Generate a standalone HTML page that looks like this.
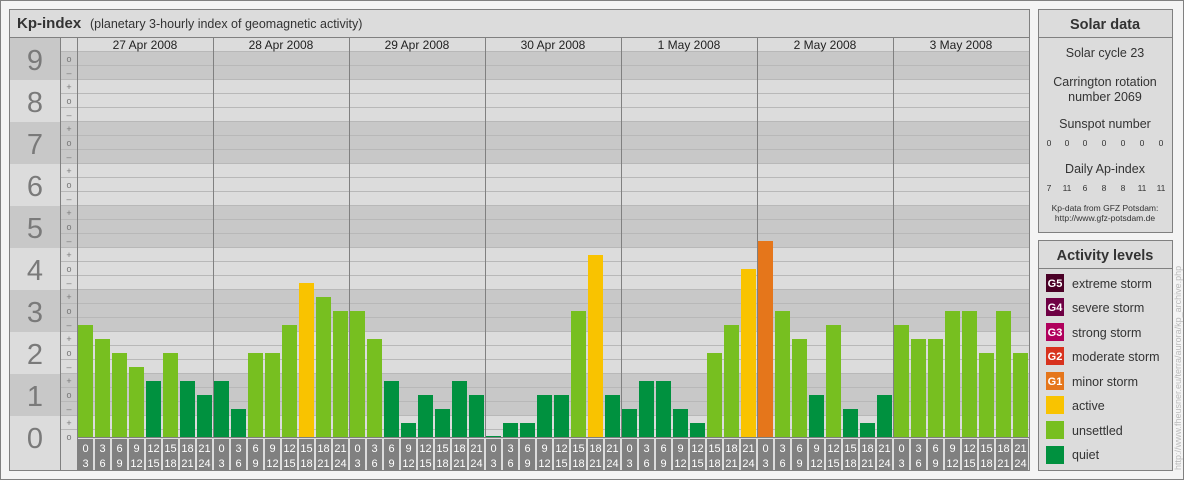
<!DOCTYPE html>
<html><head><meta charset="utf-8"><style>
body{margin:0;background:#fff}
svg{display:block;font-family:"Liberation Sans",sans-serif}
</style></head><body>
<svg width="1184" height="480" xmlns="http://www.w3.org/2000/svg">
<rect x="0.5" y="0.5" width="1183" height="479" fill="#f4f4f4" stroke="#808080"/>
<!-- main panel -->
<rect x="9.5" y="9.5" width="1020" height="461" fill="#dcdcdc" stroke="#808080"/>
<line x1="10" y1="37.5" x2="1029" y2="37.5" stroke="#808080"/>
<text x="17" y="28" font-size="15" font-weight="bold" fill="#333">Kp-index</text>
<text x="90" y="28" font-size="12.5" fill="#333">(planetary 3-hourly index of geomagnetic activity)</text>
<!-- number column bands -->
<g fill="#c8c8c8">
<rect x="10" y="38" width="50" height="42"/>
<rect x="10" y="122" width="50" height="42"/>
<rect x="10" y="206" width="50" height="42"/>
<rect x="10" y="290" width="50" height="42"/>
<rect x="10" y="374" width="50" height="42"/>
<rect x="60" y="51" width="969" height="29"/>
<rect x="60" y="122" width="969" height="42"/>
<rect x="60" y="206" width="969" height="42"/>
<rect x="60" y="290" width="969" height="42"/>
<rect x="60" y="374" width="969" height="42"/>
</g>
<g stroke="#b8b8b8" stroke-width="1">
<line x1="60" x2="1029" y1="51.5" y2="51.5"/><line x1="60" x2="1029" y1="65.5" y2="65.5"/><line x1="60" x2="1029" y1="79.5" y2="79.5"/><line x1="60" x2="1029" y1="93.5" y2="93.5"/><line x1="60" x2="1029" y1="107.5" y2="107.5"/><line x1="60" x2="1029" y1="121.5" y2="121.5"/><line x1="60" x2="1029" y1="135.5" y2="135.5"/><line x1="60" x2="1029" y1="149.5" y2="149.5"/><line x1="60" x2="1029" y1="163.5" y2="163.5"/><line x1="60" x2="1029" y1="177.5" y2="177.5"/><line x1="60" x2="1029" y1="191.5" y2="191.5"/><line x1="60" x2="1029" y1="205.5" y2="205.5"/><line x1="60" x2="1029" y1="219.5" y2="219.5"/><line x1="60" x2="1029" y1="233.5" y2="233.5"/><line x1="60" x2="1029" y1="247.5" y2="247.5"/><line x1="60" x2="1029" y1="261.5" y2="261.5"/><line x1="60" x2="1029" y1="275.5" y2="275.5"/><line x1="60" x2="1029" y1="289.5" y2="289.5"/><line x1="60" x2="1029" y1="303.5" y2="303.5"/><line x1="60" x2="1029" y1="317.5" y2="317.5"/><line x1="60" x2="1029" y1="331.5" y2="331.5"/><line x1="60" x2="1029" y1="345.5" y2="345.5"/><line x1="60" x2="1029" y1="359.5" y2="359.5"/><line x1="60" x2="1029" y1="373.5" y2="373.5"/><line x1="60" x2="1029" y1="387.5" y2="387.5"/><line x1="60" x2="1029" y1="401.5" y2="401.5"/><line x1="60" x2="1029" y1="415.5" y2="415.5"/><line x1="60" x2="1029" y1="429.5" y2="429.5"/>
</g>
<g stroke="#808080">
<line x1="60.5" y1="38" x2="60.5" y2="470"/><line x1="77.5" y1="38" x2="77.5" y2="470"/>
<line x1="213.5" y1="38" x2="213.5" y2="470"/><line x1="349.5" y1="38" x2="349.5" y2="470"/><line x1="485.5" y1="38" x2="485.5" y2="470"/><line x1="621.5" y1="38" x2="621.5" y2="470"/><line x1="757.5" y1="38" x2="757.5" y2="470"/><line x1="893.5" y1="38" x2="893.5" y2="470"/>
</g>
<!-- numbers -->
<g font-size="29" fill="#7a7a7a" text-anchor="middle">
<text x="35" y="70">9</text><text x="35" y="112">8</text><text x="35" y="154">7</text><text x="35" y="196">6</text><text x="35" y="238">5</text><text x="35" y="280">4</text><text x="35" y="322">3</text><text x="35" y="364">2</text><text x="35" y="406">1</text><text x="35" y="448">0</text>
</g>
<!-- ticks -->
<g font-size="9" fill="#777" text-anchor="middle">
<text x="69" y="62">o</text><text x="69" y="76">–</text>
<text x="69" y="90">+</text><text x="69" y="104">o</text><text x="69" y="118">–</text>
<text x="69" y="132">+</text><text x="69" y="146">o</text><text x="69" y="160">–</text>
<text x="69" y="174">+</text><text x="69" y="188">o</text><text x="69" y="202">–</text>
<text x="69" y="216">+</text><text x="69" y="230">o</text><text x="69" y="244">–</text>
<text x="69" y="258">+</text><text x="69" y="272">o</text><text x="69" y="286">–</text>
<text x="69" y="300">+</text><text x="69" y="314">o</text><text x="69" y="328">–</text>
<text x="69" y="342">+</text><text x="69" y="356">o</text><text x="69" y="370">–</text>
<text x="69" y="384">+</text><text x="69" y="398">o</text><text x="69" y="412">–</text>
<text x="69" y="426">+</text><text x="69" y="440">o</text>
</g>
<!-- dates -->
<g font-size="12" fill="#222" text-anchor="middle">
<text x="145" y="49">27 Apr 2008</text><text x="281" y="49">28 Apr 2008</text><text x="417" y="49">29 Apr 2008</text><text x="553" y="49">30 Apr 2008</text><text x="689" y="49">1 May 2008</text><text x="825" y="49">2 May 2008</text><text x="961" y="49">3 May 2008</text>
</g>
<!-- bars -->
<g transform="translate(78,0)">
<rect x="0" y="325" width="15" height="112" fill="#77bf20"/><rect x="17" y="339" width="15" height="98" fill="#77bf20"/><rect x="34" y="353" width="15" height="84" fill="#77bf20"/><rect x="51" y="367" width="15" height="70" fill="#77bf20"/><rect x="68" y="381" width="15" height="56" fill="#00913f"/><rect x="85" y="353" width="15" height="84" fill="#77bf20"/><rect x="102" y="381" width="15" height="56" fill="#00913f"/><rect x="119" y="395" width="15" height="42" fill="#00913f"/>
</g>
<g transform="translate(214,0)">
<rect x="0" y="381" width="15" height="56" fill="#00913f"/><rect x="17" y="409" width="15" height="28" fill="#00913f"/><rect x="34" y="353" width="15" height="84" fill="#77bf20"/><rect x="51" y="353" width="15" height="84" fill="#77bf20"/><rect x="68" y="325" width="15" height="112" fill="#77bf20"/><rect x="85" y="283" width="15" height="154" fill="#f9c300"/><rect x="102" y="297" width="15" height="140" fill="#77bf20"/><rect x="119" y="311" width="15" height="126" fill="#77bf20"/>
</g>
<g transform="translate(350,0)">
<rect x="0" y="311" width="15" height="126" fill="#77bf20"/><rect x="17" y="339" width="15" height="98" fill="#77bf20"/><rect x="34" y="381" width="15" height="56" fill="#00913f"/><rect x="51" y="423" width="15" height="14" fill="#00913f"/><rect x="68" y="395" width="15" height="42" fill="#00913f"/><rect x="85" y="409" width="15" height="28" fill="#00913f"/><rect x="102" y="381" width="15" height="56" fill="#00913f"/><rect x="119" y="395" width="15" height="42" fill="#00913f"/>
</g>
<g transform="translate(486,0)">
<rect x="0" y="436" width="15" height="1" fill="#00913f"/><rect x="17" y="423" width="15" height="14" fill="#00913f"/><rect x="34" y="423" width="15" height="14" fill="#00913f"/><rect x="51" y="395" width="15" height="42" fill="#00913f"/><rect x="68" y="395" width="15" height="42" fill="#00913f"/><rect x="85" y="311" width="15" height="126" fill="#77bf20"/><rect x="102" y="255" width="15" height="182" fill="#f9c300"/><rect x="119" y="395" width="15" height="42" fill="#00913f"/>
</g>
<g transform="translate(622,0)">
<rect x="0" y="409" width="15" height="28" fill="#00913f"/><rect x="17" y="381" width="15" height="56" fill="#00913f"/><rect x="34" y="381" width="15" height="56" fill="#00913f"/><rect x="51" y="409" width="15" height="28" fill="#00913f"/><rect x="68" y="423" width="15" height="14" fill="#00913f"/><rect x="85" y="353" width="15" height="84" fill="#77bf20"/><rect x="102" y="325" width="15" height="112" fill="#77bf20"/><rect x="119" y="269" width="15" height="168" fill="#f9c300"/>
</g>
<g transform="translate(758,0)">
<rect x="0" y="241" width="15" height="196" fill="#e5761b"/><rect x="17" y="311" width="15" height="126" fill="#77bf20"/><rect x="34" y="339" width="15" height="98" fill="#77bf20"/><rect x="51" y="395" width="15" height="42" fill="#00913f"/><rect x="68" y="325" width="15" height="112" fill="#77bf20"/><rect x="85" y="409" width="15" height="28" fill="#00913f"/><rect x="102" y="423" width="15" height="14" fill="#00913f"/><rect x="119" y="395" width="15" height="42" fill="#00913f"/>
</g>
<g transform="translate(894,0)">
<rect x="0" y="325" width="15" height="112" fill="#77bf20"/><rect x="17" y="339" width="15" height="98" fill="#77bf20"/><rect x="34" y="339" width="15" height="98" fill="#77bf20"/><rect x="51" y="311" width="15" height="126" fill="#77bf20"/><rect x="68" y="311" width="15" height="126" fill="#77bf20"/><rect x="85" y="353" width="15" height="84" fill="#77bf20"/><rect x="102" y="311" width="15" height="126" fill="#77bf20"/><rect x="119" y="353" width="15" height="84" fill="#77bf20"/>
</g>
<!-- hour labels -->
<rect x="78" y="437" width="951" height="33" fill="#dcdcdc"/>
<g font-size="11" fill="#fff" text-anchor="middle">
<g transform="translate(78,0)"><rect x="0" y="439" width="15" height="31" fill="#808080"/><rect x="17" y="439" width="15" height="31" fill="#808080"/><rect x="34" y="439" width="15" height="31" fill="#808080"/><rect x="51" y="439" width="15" height="31" fill="#808080"/><rect x="68" y="439" width="15" height="31" fill="#808080"/><rect x="85" y="439" width="15" height="31" fill="#808080"/><rect x="102" y="439" width="15" height="31" fill="#808080"/><rect x="119" y="439" width="15" height="31" fill="#808080"/><text x="7.5" y="452">0</text><text x="7.5" y="467">3</text><text x="24.5" y="452">3</text><text x="24.5" y="467">6</text><text x="41.5" y="452">6</text><text x="41.5" y="467">9</text><text x="58.5" y="452">9</text><text x="58.5" y="467">12</text><text x="75.5" y="452">12</text><text x="75.5" y="467">15</text><text x="92.5" y="452">15</text><text x="92.5" y="467">18</text><text x="109.5" y="452">18</text><text x="109.5" y="467">21</text><text x="126.5" y="452">21</text><text x="126.5" y="467">24</text></g>
<g transform="translate(214,0)"><rect x="0" y="439" width="15" height="31" fill="#808080"/><rect x="17" y="439" width="15" height="31" fill="#808080"/><rect x="34" y="439" width="15" height="31" fill="#808080"/><rect x="51" y="439" width="15" height="31" fill="#808080"/><rect x="68" y="439" width="15" height="31" fill="#808080"/><rect x="85" y="439" width="15" height="31" fill="#808080"/><rect x="102" y="439" width="15" height="31" fill="#808080"/><rect x="119" y="439" width="15" height="31" fill="#808080"/><text x="7.5" y="452">0</text><text x="7.5" y="467">3</text><text x="24.5" y="452">3</text><text x="24.5" y="467">6</text><text x="41.5" y="452">6</text><text x="41.5" y="467">9</text><text x="58.5" y="452">9</text><text x="58.5" y="467">12</text><text x="75.5" y="452">12</text><text x="75.5" y="467">15</text><text x="92.5" y="452">15</text><text x="92.5" y="467">18</text><text x="109.5" y="452">18</text><text x="109.5" y="467">21</text><text x="126.5" y="452">21</text><text x="126.5" y="467">24</text></g>
<g transform="translate(350,0)"><rect x="0" y="439" width="15" height="31" fill="#808080"/><rect x="17" y="439" width="15" height="31" fill="#808080"/><rect x="34" y="439" width="15" height="31" fill="#808080"/><rect x="51" y="439" width="15" height="31" fill="#808080"/><rect x="68" y="439" width="15" height="31" fill="#808080"/><rect x="85" y="439" width="15" height="31" fill="#808080"/><rect x="102" y="439" width="15" height="31" fill="#808080"/><rect x="119" y="439" width="15" height="31" fill="#808080"/><text x="7.5" y="452">0</text><text x="7.5" y="467">3</text><text x="24.5" y="452">3</text><text x="24.5" y="467">6</text><text x="41.5" y="452">6</text><text x="41.5" y="467">9</text><text x="58.5" y="452">9</text><text x="58.5" y="467">12</text><text x="75.5" y="452">12</text><text x="75.5" y="467">15</text><text x="92.5" y="452">15</text><text x="92.5" y="467">18</text><text x="109.5" y="452">18</text><text x="109.5" y="467">21</text><text x="126.5" y="452">21</text><text x="126.5" y="467">24</text></g>
<g transform="translate(486,0)"><rect x="0" y="439" width="15" height="31" fill="#808080"/><rect x="17" y="439" width="15" height="31" fill="#808080"/><rect x="34" y="439" width="15" height="31" fill="#808080"/><rect x="51" y="439" width="15" height="31" fill="#808080"/><rect x="68" y="439" width="15" height="31" fill="#808080"/><rect x="85" y="439" width="15" height="31" fill="#808080"/><rect x="102" y="439" width="15" height="31" fill="#808080"/><rect x="119" y="439" width="15" height="31" fill="#808080"/><text x="7.5" y="452">0</text><text x="7.5" y="467">3</text><text x="24.5" y="452">3</text><text x="24.5" y="467">6</text><text x="41.5" y="452">6</text><text x="41.5" y="467">9</text><text x="58.5" y="452">9</text><text x="58.5" y="467">12</text><text x="75.5" y="452">12</text><text x="75.5" y="467">15</text><text x="92.5" y="452">15</text><text x="92.5" y="467">18</text><text x="109.5" y="452">18</text><text x="109.5" y="467">21</text><text x="126.5" y="452">21</text><text x="126.5" y="467">24</text></g>
<g transform="translate(622,0)"><rect x="0" y="439" width="15" height="31" fill="#808080"/><rect x="17" y="439" width="15" height="31" fill="#808080"/><rect x="34" y="439" width="15" height="31" fill="#808080"/><rect x="51" y="439" width="15" height="31" fill="#808080"/><rect x="68" y="439" width="15" height="31" fill="#808080"/><rect x="85" y="439" width="15" height="31" fill="#808080"/><rect x="102" y="439" width="15" height="31" fill="#808080"/><rect x="119" y="439" width="15" height="31" fill="#808080"/><text x="7.5" y="452">0</text><text x="7.5" y="467">3</text><text x="24.5" y="452">3</text><text x="24.5" y="467">6</text><text x="41.5" y="452">6</text><text x="41.5" y="467">9</text><text x="58.5" y="452">9</text><text x="58.5" y="467">12</text><text x="75.5" y="452">12</text><text x="75.5" y="467">15</text><text x="92.5" y="452">15</text><text x="92.5" y="467">18</text><text x="109.5" y="452">18</text><text x="109.5" y="467">21</text><text x="126.5" y="452">21</text><text x="126.5" y="467">24</text></g>
<g transform="translate(758,0)"><rect x="0" y="439" width="15" height="31" fill="#808080"/><rect x="17" y="439" width="15" height="31" fill="#808080"/><rect x="34" y="439" width="15" height="31" fill="#808080"/><rect x="51" y="439" width="15" height="31" fill="#808080"/><rect x="68" y="439" width="15" height="31" fill="#808080"/><rect x="85" y="439" width="15" height="31" fill="#808080"/><rect x="102" y="439" width="15" height="31" fill="#808080"/><rect x="119" y="439" width="15" height="31" fill="#808080"/><text x="7.5" y="452">0</text><text x="7.5" y="467">3</text><text x="24.5" y="452">3</text><text x="24.5" y="467">6</text><text x="41.5" y="452">6</text><text x="41.5" y="467">9</text><text x="58.5" y="452">9</text><text x="58.5" y="467">12</text><text x="75.5" y="452">12</text><text x="75.5" y="467">15</text><text x="92.5" y="452">15</text><text x="92.5" y="467">18</text><text x="109.5" y="452">18</text><text x="109.5" y="467">21</text><text x="126.5" y="452">21</text><text x="126.5" y="467">24</text></g>
<g transform="translate(894,0)"><rect x="0" y="439" width="15" height="31" fill="#808080"/><rect x="17" y="439" width="15" height="31" fill="#808080"/><rect x="34" y="439" width="15" height="31" fill="#808080"/><rect x="51" y="439" width="15" height="31" fill="#808080"/><rect x="68" y="439" width="15" height="31" fill="#808080"/><rect x="85" y="439" width="15" height="31" fill="#808080"/><rect x="102" y="439" width="15" height="31" fill="#808080"/><rect x="119" y="439" width="15" height="31" fill="#808080"/><text x="7.5" y="452">0</text><text x="7.5" y="467">3</text><text x="24.5" y="452">3</text><text x="24.5" y="467">6</text><text x="41.5" y="452">6</text><text x="41.5" y="467">9</text><text x="58.5" y="452">9</text><text x="58.5" y="467">12</text><text x="75.5" y="452">12</text><text x="75.5" y="467">15</text><text x="92.5" y="452">15</text><text x="92.5" y="467">18</text><text x="109.5" y="452">18</text><text x="109.5" y="467">21</text><text x="126.5" y="452">21</text><text x="126.5" y="467">24</text></g>
</g>
<line x1="77" y1="437.5" x2="1029" y2="437.5" stroke="#808080"/>
<!-- solar data -->
<rect x="1038.5" y="9.5" width="134" height="223" fill="#dcdcdc" stroke="#808080"/>
<line x1="1039" y1="37.5" x2="1172" y2="37.5" stroke="#808080"/>
<g text-anchor="middle" fill="#333">
<text x="1105" y="29" font-size="14.5" font-weight="bold">Solar data</text>
<text x="1105" y="57" font-size="12.5">Solar cycle 23</text>
<text x="1105" y="86" font-size="12.5">Carrington rotation</text>
<text x="1105" y="101" font-size="12.5">number 2069</text>
<text x="1105" y="128" font-size="12.5">Sunspot number</text>
<text x="1105" y="173" font-size="12.5">Daily Ap-index</text>
<text x="1105" y="211" font-size="8.5">Kp-data from GFZ Potsdam:</text>
<text x="1105" y="221" font-size="8.5">http://www.gfz-potsdam.de</text>
</g>
<g text-anchor="middle" fill="#333" font-size="8.5">
<text x="1049" y="146">0</text><text x="1067" y="146">0</text><text x="1085" y="146">0</text><text x="1104" y="146">0</text><text x="1123" y="146">0</text><text x="1142" y="146">0</text><text x="1161" y="146">0</text>
<text x="1049" y="191">7</text><text x="1067" y="191">11</text><text x="1085" y="191">6</text><text x="1104" y="191">8</text><text x="1123" y="191">8</text><text x="1142" y="191">11</text><text x="1161" y="191">11</text>
</g>
<!-- activity levels -->
<rect x="1038.5" y="240.5" width="134" height="230" fill="#dcdcdc" stroke="#808080"/>
<line x1="1039" y1="268.5" x2="1172" y2="268.5" stroke="#808080"/>
<text x="1105" y="260" font-size="14.5" font-weight="bold" fill="#333" text-anchor="middle">Activity levels</text>
<g>
<rect x="1046" y="274" width="18" height="18" fill="#4a0026"/>
<rect x="1046" y="298" width="18" height="18" fill="#6e0044"/>
<rect x="1046" y="323" width="18" height="18" fill="#b0005c"/>
<rect x="1046" y="347" width="18" height="18" fill="#d8321e"/>
<rect x="1046" y="372" width="18" height="18" fill="#e5761b"/>
<rect x="1046" y="396" width="18" height="18" fill="#f9c300"/>
<rect x="1046" y="421" width="18" height="18" fill="#77bf20"/>
<rect x="1046" y="446" width="18" height="18" fill="#00913f"/>
</g>
<g font-size="11" font-weight="bold" fill="#fff" text-anchor="middle">
<text x="1055" y="287">G5</text><text x="1055" y="311">G4</text><text x="1055" y="336">G3</text><text x="1055" y="360">G2</text><text x="1055" y="385">G1</text>
</g>
<g font-size="12.5" fill="#333">
<text x="1072" y="288">extreme storm</text><text x="1072" y="312">severe storm</text><text x="1072" y="337">strong storm</text><text x="1072" y="361">moderate storm</text><text x="1072" y="386">minor storm</text><text x="1072" y="410">active</text><text x="1072" y="435">unsettled</text><text x="1072" y="459">quiet</text>
</g>
<text transform="translate(1181,470) rotate(-90)" font-size="9" fill="#bbb">http://www.fheusner.eu/terra/aurora/kp_archive.php</text>
</svg>
</body></html>
